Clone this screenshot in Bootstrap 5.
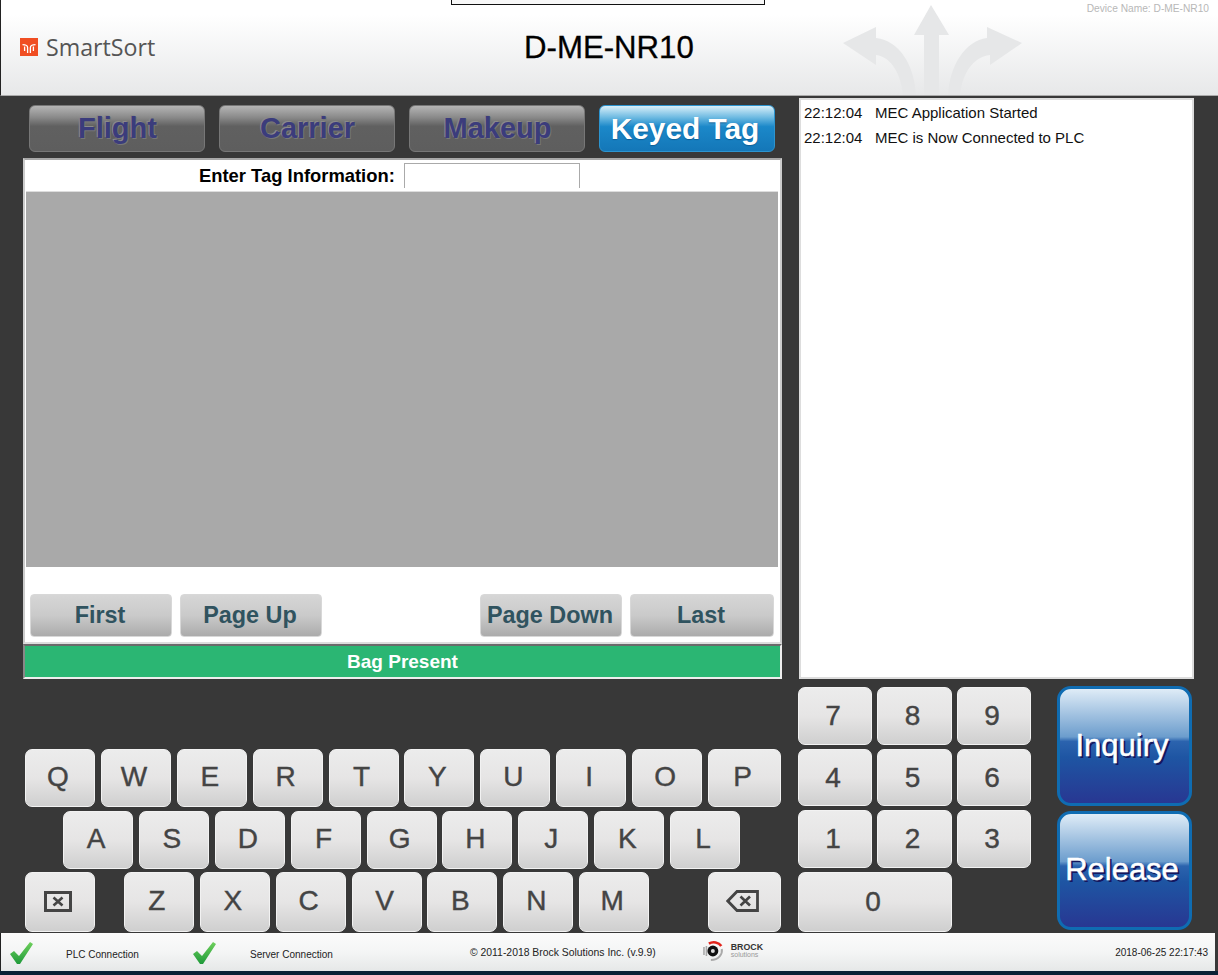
<!DOCTYPE html>
<html lang="en">
<head>
    <meta charset="UTF-8">
    <meta name="viewport" content="width=device-width, initial-scale=1.0">
    <title>SmartSort</title>
    <link href="https://cdn.jsdelivr.net/npm/bootstrap@5.3.0/dist/css/bootstrap.min.css" rel="stylesheet">
    <style>
        body {
            width: 1218px;
            height: 975px;
            overflow: hidden;
            background: #383838;
            font-family: "Liberation Sans", Arial, sans-serif;
            color: #111;
        }
        .top-head {
            height: 96px;
            position: relative;
            background: linear-gradient(#fff 15%, #e7e8e9 100%);
            border-left: 1px solid #222;
            border-bottom: 1px solid #aaa;
        }
        .top-stub {
            position: absolute;
            left: 450px;
            top: -1px;
            width: 314px;
            height: 6px;
            border: 1px solid #111;
            background: #f8f8f8;
        }
        .brand-box { width: 523px; padding-left: 19px; }
        .brand-name {
            font-family: "Open Sans", sans-serif;
            font-size: 23.2px;
            color: #555;
            margin-left: 8px;
        }
        .head-title {
            width: 170px;
            padding-top: 2px;
            font-size: 31.2px;
            color: #000;
            -webkit-text-stroke: 0.3px #000;
            white-space: nowrap;
        }
        .head-arrows { margin-left: 149px; }
        .device-name {
            position: absolute;
            right: 9px;
            top: 1px;
            font-size: 10.2px;
            color: #b8b8b8;
        }
        .main-area { height: 837px; }
        .left-side { width: 782px; padding-left: 23px; }
        .tab-row { gap: 14px; margin: 9px 0 6px 6px; }
        .tab-btn {
            width: 176px;
            height: 47px;
            padding: 0 0 0 1px;
            border: 1px solid #777;
            border-radius: 6px;
            font-size: 29px;
            font-weight: 700;
            line-height: 45px;
            color: #3b3c7c;
            text-shadow: -1px -1px 0 #8a8a8a, 1px 1px 0 #777;
            background: linear-gradient(#b5b5b5 0, #8a8a8a 25%, #606060 45%, #5e5e5e 100%);
        }
        .tab-btn.tab-on {
            color: #fff;
            padding: 0 4px 0 0;
            font-size: 29.8px;
            text-shadow: 0 1px 1px #0d5f96;
            border-color: #2c94cf;
            background: linear-gradient(#d9eff9 0, #6fbbe2 25%, #1b88c9 46%, #1477b8 100%);
        }
        .tag-panel {
            width: 759px;
            height: 486px;
            background: #fff;
            border-top: 2px solid #a8a8a8;
            border-left: 2px solid #ccc;
            border-right: 2px solid #ccc;
            border-bottom: 2px solid #ddd;
        }
        .tag-line { height: 31px; padding-left: 174px; gap: 9px; }
        .tag-label { font-size: 18.4px; font-weight: 700; color: #000; white-space: nowrap; margin-top: 2px; }
        .tag-input.form-control {
            width: 176px;
            height: 25px;
            margin-top: 3px;
            border: 1px solid #aaa;
            border-bottom: 0;
            border-radius: 0;
            padding: 0;
        }
        .tag-grid {
            height: 376px;
            margin: 0 2px 27px 1px;
            background: #a9a9a9;
            border-top: 1px solid #ddd;
        }
        .page-row { padding: 0 6px 0 5px; gap: 8px; }
        .page-btn {
            width: 142px;
            height: 43px;
            padding: 0 2px 0 0;
            border: 1px solid #d8d8d8;
            border-radius: 4px;
            font-size: 23.4px;
            font-weight: 700;
            line-height: 41px;
            color: #30535f;
            background: linear-gradient(#d6d6d6 0, #cacaca 50%, #ababab 100%);
        }
        .page-btn.page-last { width: 144px; }
        .bag-bar {
            width: 759px;
            height: 35px;
            background: #2bb673;
            border: 2px solid #eee;
            border-top-color: #6a6a6a;
            border-left-color: #888;
            color: #fff;
            font-size: 19px;
            font-weight: 700;
            line-height: 32px;
            text-align: center;
        }
        .key-wrap { margin: 70px 1px 0 2px; }
        .key-row { gap: 5.9px; height: 58px; margin-bottom: 4px; }
        .key-row.row-b { margin-left: 38px; }
        .key-row.row-c { height: 60px; margin-bottom: 0; margin-top: -1px; }
        .key-btn {
            width: 70px;
            height: 100%;
            padding: 0 4px 2px 0;
            border: 1px solid #f2f2f2;
            border-radius: 7px;
            font-size: 28px;
            line-height: 1;
            color: #444;
            -webkit-text-stroke: 0.4px #444;
            background: linear-gradient(#ececec 0, #e6e5e5 50%, #cfcfcf 100%);
        }
        .key-btn svg { display: block; margin: 0 auto; }
        .key-z { margin-left: 23px; }
        .key-wide { width: 73px; }
        .right-side { margin-left: 16px; width: 396px; }
        .log-box {
            width: 395px;
            height: 581px;
            margin: 2px 0 7px 1px;
            padding: 1px 3px;
            background: #fff;
            border: 2px solid #ddd;
            font-size: 15px;
            line-height: 24.5px;
        }
        .log-time { width: 71px; }
        .num-grid {
            display: grid;
            grid-template-columns: 74px 75px 74px;
            grid-template-rows: 58px 57px 58px 60px;
            gap: 4px 5px;
            margin-top: 1px;
        }
        .num-zero { grid-column: span 2; width: 100%; }
        .num-grid .key-btn { width: 100%; padding-bottom: 0; }
        .act-col { margin-left: 26px; gap: 5px; }
        .act-btn {
            width: 135px;
            height: 119.5px;
            padding: 0 5px 0 0;
            border: 3px solid #0f6cb2;
            border-radius: 14px;
            font-size: 31px;
            color: #fff;
            -webkit-text-stroke: 0.5px #fff;
            text-shadow: 2px 2px 0 #14175e;
            background: linear-gradient(#dfecf7 0, #6c9dcd 42%, #2b63ae 46%, #1e55a3 60%, #283792 100%);
        }
        .status-bar {
            height: 38px;
            background: linear-gradient(#fbfbfb 0, #f4f5f5 50%, #e6e8e8 100%);
            font-size: 10px;
            color: #222;
            border-left: 1px solid #222;
            width: 1215px;
        }
        .bottom-strip { height: 4px; background: #0b2236; }
        .stat-a { width: 65px; padding: 1px 0 0 8px; }
        .stat-b { width: 126px; padding-top: 5px; }
        .stat-c { width: 58px; padding-top: 1px; }
        .stat-d { width: 220px; padding-top: 5px; }
        .stat-copy { width: 231px; padding-top: 2px; font-size: 10.4px; white-space: nowrap; }
        .brock-logo { width: 62px; height: 22px; margin-top: -3px; }
        .brock-name { line-height: 8px; margin-left: 6px; }
        .brock-name b { display: block; font-size: 8.8px; color: #333; }
        .brock-name span { display: block; font-size: 7px; color: #999; }
        .stat-date { margin-left: auto; margin-right: 7px; white-space: nowrap; }
    </style>
</head>
<body>
    <header class="top-head d-flex align-items-center">
        <div class="top-stub"></div>
        <div class="brand-box d-flex align-items-center">
            <svg width="18" height="18" viewBox="0 0 18 18">
                <rect width="18" height="18" fill="#f04e23"/>
                <path d="M7.6 15V9.5C7.6 7.4 5.5 6.6 2.5 6.6M10.4 15V9.5C10.4 7.4 12.5 6.6 15.5 6.6M4.6 8.5V13M13.4 8.5V13" stroke="#fff" stroke-width="1.3" fill="none"/>
            </svg>
            <span class="brand-name">SmartSort</span>
        </div>
        <div class="head-title">D-ME-NR10</div>
        <svg class="head-arrows align-self-end" width="180" height="91" viewBox="843 4 180 91">
            <path fill="#e6e7e8" d="M931 5L949 35H939V95H924V35H914Z"/>
            <path fill="#e6e7e8" d="M843 43L876 27V38C900 41 914 65 916 95H903C901 75 892 57 876 55V65Z"/>
            <path fill="#e6e7e8" d="M1022 43L987 27V38C965 41 950 65 948 95H960C962 75 972 57 990 55V65Z"/>
        </svg>
        <div class="device-name">Device Name: D-ME-NR10</div>
    </header>

    <main class="main-area d-flex">
        <section class="left-side">
            <div class="tab-row d-flex">
                <button class="btn tab-btn" type="button">Flight</button>
                <button class="btn tab-btn" type="button">Carrier</button>
                <button class="btn tab-btn" type="button">Makeup</button>
                <button class="btn tab-btn tab-on" type="button">Keyed Tag</button>
            </div>
            <div class="tag-panel">
                <div class="tag-line d-flex align-items-start">
                    <label class="tag-label" for="tagInput">Enter Tag Information:</label>
                    <input id="tagInput" class="form-control tag-input" type="text">
                </div>
                <div class="tag-grid"></div>
                <div class="page-row d-flex justify-content-between">
                    <div class="d-flex gap-2">
                        <button class="btn page-btn" type="button">First</button>
                        <button class="btn page-btn" type="button">Page Up</button>
                    </div>
                    <div class="d-flex gap-2">
                        <button class="btn page-btn" type="button">Page Down</button>
                        <button class="btn page-btn page-last" type="button">Last</button>
                    </div>
                </div>
            </div>
            <div class="bag-bar">Bag Present</div>

            <div class="key-wrap">
                <div class="key-row d-flex">
                    <button class="btn key-btn" type="button">Q</button>
                    <button class="btn key-btn" type="button">W</button>
                    <button class="btn key-btn" type="button">E</button>
                    <button class="btn key-btn" type="button">R</button>
                    <button class="btn key-btn" type="button">T</button>
                    <button class="btn key-btn" type="button">Y</button>
                    <button class="btn key-btn" type="button">U</button>
                    <button class="btn key-btn" type="button">I</button>
                    <button class="btn key-btn" type="button">O</button>
                    <button class="btn key-btn key-wide" type="button">P</button>
                </div>
                <div class="key-row row-b d-flex">
                    <button class="btn key-btn" type="button">A</button>
                    <button class="btn key-btn" type="button">S</button>
                    <button class="btn key-btn" type="button">D</button>
                    <button class="btn key-btn" type="button">F</button>
                    <button class="btn key-btn" type="button">G</button>
                    <button class="btn key-btn" type="button">H</button>
                    <button class="btn key-btn" type="button">J</button>
                    <button class="btn key-btn" type="button">K</button>
                    <button class="btn key-btn" type="button">L</button>
                </div>
                <div class="key-row row-c d-flex">
                    <button class="btn key-btn" type="button" aria-label="Clear">
                        <svg width="28" height="21" viewBox="0 0 28 21">
                            <rect x="1.5" y="1.5" width="25" height="18" fill="none" stroke="#444" stroke-width="3"/>
                            <path d="M9.5 6.5L18.5 14.5M18.5 6.5L9.5 14.5" stroke="#444" stroke-width="2.6"/>
                        </svg>
                    </button>
                    <button class="btn key-btn key-z" type="button">Z</button>
                    <button class="btn key-btn" type="button">X</button>
                    <button class="btn key-btn" type="button">C</button>
                    <button class="btn key-btn" type="button">V</button>
                    <button class="btn key-btn" type="button">B</button>
                    <button class="btn key-btn" type="button">N</button>
                    <button class="btn key-btn" type="button">M</button>
                    <button class="btn key-btn key-wide ms-auto" type="button" aria-label="Backspace">
                        <svg width="33" height="22" viewBox="0 0 33 22">
                            <path d="M31.5 1.5H11L1.8 11L11 20.5H31.5Z" fill="none" stroke="#444" stroke-width="2.8"/>
                            <path d="M14.5 6.5L24 15.5M24 6.5L14.5 15.5" stroke="#444" stroke-width="2.6"/>
                        </svg>
                    </button>
                </div>
            </div>
        </section>

        <section class="right-side">
            <div class="log-box">
                <div class="d-flex"><span class="log-time">22:12:04</span><span>MEC Application Started</span></div>
                <div class="d-flex"><span class="log-time">22:12:04</span><span>MEC is Now Connected to PLC</span></div>
            </div>
            <div class="d-flex align-items-start">
                <div class="num-grid">
                    <button class="btn key-btn" type="button">7</button>
                    <button class="btn key-btn" type="button">8</button>
                    <button class="btn key-btn" type="button">9</button>
                    <button class="btn key-btn" type="button">4</button>
                    <button class="btn key-btn" type="button">5</button>
                    <button class="btn key-btn" type="button">6</button>
                    <button class="btn key-btn" type="button">1</button>
                    <button class="btn key-btn" type="button">2</button>
                    <button class="btn key-btn" type="button">3</button>
                    <button class="btn key-btn num-zero" type="button">0</button>
                </div>
                <div class="act-col d-flex flex-column">
                    <button class="btn act-btn" type="button">Inquiry</button>
                    <button class="btn act-btn" type="button">Release</button>
                </div>
            </div>
        </section>
    </main>

    <footer class="status-bar d-flex align-items-center">
        <div class="stat-a">
            <svg class="d-block" width="25" height="24" viewBox="0 0 25 24">
                <defs>
                    <linearGradient id="chk" x1="0" y1="0" x2="0" y2="1">
                        <stop offset="0" stop-color="#6fd05c"/>
                        <stop offset="1" stop-color="#1f9a3a"/>
                    </linearGradient>
                </defs>
                <path fill="url(#chk)" d="M1 13L5 10L10 15L21 1L24 3L11 23H8Z"/>
            </svg>
        </div>
        <div class="stat-b">PLC Connection</div>
        <div class="stat-c">
            <svg class="d-block" width="25" height="24" viewBox="0 0 25 24">
                <path fill="url(#chk)" d="M1 13L5 10L10 15L21 1L24 3L11 23H8Z"/>
            </svg>
        </div>
        <div class="stat-d">Server Connection</div>
        <div class="stat-copy">&copy; 2011-2018 Brock Solutions Inc. (v.9.9)</div>
        <div class="brock-logo d-flex align-items-center">
            <svg width="24" height="22" viewBox="0 0 24 22">
                <path d="M3 7V15M5.5 6V16" stroke="#aaa" stroke-width="1.6"/>
                <circle cx="12" cy="11" r="5.5" fill="#111"/>
                <circle cx="12" cy="11" r="2" fill="#ddd"/>
                <path d="M8 3.5C12 1 18 2 20.5 6" stroke="#e2231a" stroke-width="2.6" fill="none"/>
                <path d="M21 9C22 14 18 20 10 20" stroke="#aaa" stroke-width="2" fill="none"/>
            </svg>
            <div class="brock-name"><b>BROCK</b><span>solutions</span></div>
        </div>
        <div class="stat-date">2018-06-25 22:17:43</div>
    </footer>
    <div class="bottom-strip"></div>

    <script src="https://cdn.jsdelivr.net/npm/bootstrap@5.3.0/dist/js/bootstrap.bundle.min.js"></script>
</body>
</html>
